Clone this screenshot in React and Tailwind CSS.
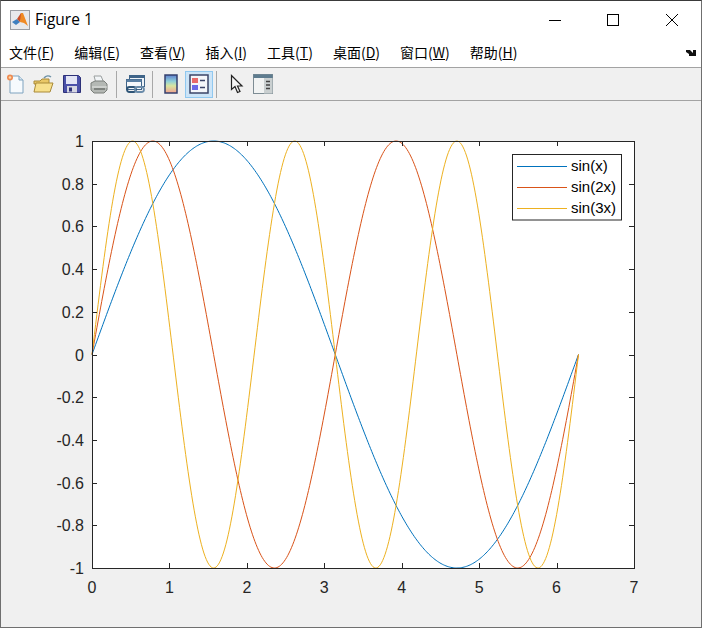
import { useMemo } from 'react';

const MENUS = [
  ['文件', 'F'],
  ['编辑', 'E'],
  ['查看', 'V'],
  ['插入', 'I'],
  ['工具', 'T'],
  ['桌面', 'D'],
  ['窗口', 'W'],
  ['帮助', 'H'],
];

// axes box, in page pixels
const LEFT = 92;
const RIGHT = 634;
const TOP = 141;
const BOTTOM = 568;

const X_TICKS = [0, 1, 2, 3, 4, 5, 6, 7];
const Y_TICKS = ['1', '0.8', '0.6', '0.4', '0.2', '0', '-0.2', '-0.4', '-0.6', '-0.8', '-1'];

const SERIES = [
  { label: 'sin(x)', k: 1, color: '#0072BD', y: 166 },
  { label: 'sin(2x)', k: 2, color: '#D95319', y: 187 },
  { label: 'sin(3x)', k: 3, color: '#EDB120', y: 208 },
];

const px = (x) => LEFT + (x / 7) * (RIGHT - LEFT);
const py = (y) => TOP + ((1 - y) / 2) * (BOTTOM - TOP);

function MatlabLogo() {
  return (
    <svg width="20" height="20" viewBox="0 0 20 20">
      <rect x="0.5" y="0.5" width="19" height="19" fill="#e8e9ec" stroke="#9a9da3" />
      <polygon points="2,12 7,9 10,12 6,15" fill="#3f7fbf" />
      <polygon points="7,9 11,3 13,3 10,12" fill="#c9502a" />
      <polygon points="11,3 13,3 18,16 14,13 10,12" fill="#f08a24" />
    </svg>
  );
}

function NewIcon() {
  return (
    <svg width="20" height="22" viewBox="0 0 20 22">
      <path d="M4 3h9l4 4v13H4z" fill="#f6fafd" stroke="#7fa3bf" />
      <path d="M13 3v4h4" fill="#d8e6f0" stroke="#7fa3bf" />
      <circle cx="4" cy="4.500" r="3" fill="#ef8a50" />
      <circle cx="4" cy="4.500" r="1.300" fill="#fbd7a8" />
    </svg>
  );
}

function OpenIcon() {
  return (
    <svg width="22" height="22" viewBox="0 0 22 22">
      <path d="M12 5c2-2.500 5-2.500 7-1" fill="none" stroke="#6f93a8" strokeWidth="1.500" />
      <path d="M2 8h6l2-2h7v5H2z" fill="#e9c766" stroke="#a98a38" />
      <path d="M2 19l2-9h17l-3 9z" fill="#f7e08c" stroke="#a98a38" />
    </svg>
  );
}

function SaveIcon() {
  return (
    <svg width="20" height="20" viewBox="0 0 20 20">
      <path d="M1.500 1.500h15l2 2v15h-17z" fill="#4a50a8" stroke="#2d3178" />
      <rect x="4" y="2" width="11" height="8" fill="#e3e5f5" />
      <rect x="5" y="12" width="10" height="6.500" fill="#d5d6e2" />
      <rect x="7" y="13.500" width="3" height="4" fill="#2d3178" />
    </svg>
  );
}

function PrintIcon() {
  return (
    <svg width="20" height="20" viewBox="0 0 20 20">
      <path d="M5 2h7l3 7H7z" fill="#f2f5f7" stroke="#9a9f9f" />
      <path d="M2 9l4-2h9l3 3v6l-3 3H5l-3-3z" fill="#b4b8b4" stroke="#7a7e7a" />
      <path d="M3 13h15" stroke="#e6e8e6" />
      <path d="M5 15h11" stroke="#6c706c" strokeWidth="1.500" />
    </svg>
  );
}

function LinkIcon() {
  return (
    <svg width="21" height="21" viewBox="0 0 21 21">
      <rect x="4.500" y="1.500" width="15" height="11" fill="#eef3f8" stroke="#3f6488" />
      <rect x="4.500" y="1.500" width="15" height="2.500" fill="#3f6488" />
      <rect x="1.500" y="5.500" width="15" height="10" fill="#f6f8fb" stroke="#3f6488" />
      <rect x="1.500" y="5.500" width="15" height="2.500" fill="#5a7fa3" />
      <rect x="2" y="13" width="9" height="5" rx="2.500" fill="none" stroke="#2f5577" strokeWidth="1.800" />
      <rect x="10" y="13" width="9" height="5" rx="2.500" fill="none" stroke="#6b8caa" strokeWidth="1.800" />
    </svg>
  );
}

function ColorbarIcon() {
  return (
    <svg width="14" height="20" viewBox="0 0 14 20">
      <defs>
        <linearGradient id="bar" x1="0" y1="0" x2="0" y2="1">
          <stop offset="0" stopColor="#5f7fd0" />
          <stop offset="0.35" stopColor="#8fd0d8" />
          <stop offset="0.6" stopColor="#d8e6a0" />
          <stop offset="1" stopColor="#f0a090" />
        </linearGradient>
      </defs>
      <rect x="1" y="1" width="12" height="18" fill="url(#bar)" stroke="#35406e" strokeWidth="1.500" />
    </svg>
  );
}

function LegendIcon() {
  return (
    <svg width="20" height="20" viewBox="0 0 20 20">
      <rect x="1" y="1" width="18" height="18" fill="#f4f6fa" stroke="#3b4468" strokeWidth="1.500" />
      <rect x="3" y="4" width="6" height="5" fill="#e86a6a" />
      <rect x="3" y="11" width="6" height="5" fill="#6a6ae8" />
      <path d="M11 6.500h5M11 13.500h5" stroke="#3b4468" strokeWidth="1.500" />
    </svg>
  );
}

function CursorIcon() {
  return (
    <svg width="14" height="20" viewBox="0 0 14 20">
      <path d="M1.500 1.500v14l3.500-3 2.500 6 2.500-1-2.500-5.500h4.500z" fill="#f5f5f5" stroke="#222" strokeWidth="1.200" />
    </svg>
  );
}

function PlotToolsIcon() {
  return (
    <svg width="20" height="20" viewBox="0 0 20 20">
      <rect x="0.500" y="0.500" width="19" height="19" fill="#f1f3f3" stroke="#7d8c94" />
      <rect x="0.500" y="0.500" width="19" height="3.500" fill="#5e7c8f" />
      <rect x="11" y="4" width="8.500" height="15.500" fill="#c9cfd0" />
      <path d="M13 7.500h4M13 11h4M13 14.500h4" stroke="#444" strokeWidth="1.500" />
    </svg>
  );
}

function Plot() {
  const lines = useMemo(
    () =>
      SERIES.map((s) => {
        const pts = [];
        for (let i = 0; i <= 400; i++) {
          const x = (i / 400) * 2 * Math.PI;
          pts.push(`${px(x).toFixed(2)},${py(Math.sin(s.k * x)).toFixed(2)}`);
        }
        return pts.join(' ');
      }),
    []
  );

  return (
    <svg className="block h-[526px] w-[700px]" viewBox="1 101 700 526" style={{ fontFamily: '"Liberation Sans", Arial, sans-serif' }}>
      <rect x={LEFT} y={TOP} width={RIGHT - LEFT} height={BOTTOM - TOP} fill="#fff" />

      {lines.map((pts, i) => (
        <polyline key={SERIES[i].label} points={pts} fill="none" stroke={SERIES[i].color} strokeWidth="1" />
      ))}

      {X_TICKS.map((t) => {
        const x = Math.round(px(t)) + 0.5;
        return (
          <g key={t}>
            <path d={`M${x} ${BOTTOM}v-5M${x} ${TOP}v5`} stroke="#262626" />
            <text x={px(t)} y={593} textAnchor="middle" fontSize="16" fill="#262626">{t}</text>
          </g>
        );
      })}
      {Y_TICKS.map((t, i) => {
        const y = Math.round(TOP + (i / 10) * (BOTTOM - TOP)) + 0.5;
        return (
          <g key={t}>
            <path d={`M${LEFT} ${y}h5M${RIGHT} ${y}h-5`} stroke="#262626" />
            <text x={84} y={y + 5.5} textAnchor="end" fontSize="16" fill="#262626">{t}</text>
          </g>
        );
      })}
      <rect x={LEFT + 0.5} y={TOP + 0.5} width={RIGHT - LEFT} height={BOTTOM - TOP} fill="none" stroke="#262626" />

      <rect x="512.500" y="154.500" width="109" height="65.500" fill="#fff" stroke="#262626" />
      {SERIES.map((s) => (
        <g key={s.label}>
          <path d={`M517 ${s.y + 0.5}H567`} stroke={s.color} />
          <text x="571" y={s.y + 5} fontSize="15" fill="#000">{s.label}</text>
        </g>
      ))}
    </svg>
  );
}

export default function App() {
  return (
    <div className="flex h-[628px] w-[702px] flex-col border border-[#6f6f6f] border-t-[#3a3a3a] bg-white font-['Liberation_Sans','Noto_Sans_CJK_SC',sans-serif]">
      {/* title bar */}
      <div className="flex h-[37px] items-center pl-[9px]">
        <MatlabLogo />
        <span className="ml-[5px] font-['Open_Sans',sans-serif] text-[15.5px] text-black">Figure 1</span>
        <div className="ml-auto flex items-center">
          <svg width="12" height="12" viewBox="0 0 12 12" className="mr-[46px]"><path d="M0 6.500h12" stroke="#000" /></svg>
          <svg width="12" height="12" viewBox="0 0 12 12" className="mr-[47px]"><rect x="0.500" y="0.500" width="11" height="11" fill="none" stroke="#000" /></svg>
          <svg width="12" height="12" viewBox="0 0 12 12" className="mr-[23px]"><path d="M0 0l12 12M12 0L0 12" stroke="#000" /></svg>
        </div>
      </div>

      {/* menu bar */}
      <div className="relative flex h-[29px] items-center gap-[20px] pl-[8px] text-[14px] text-black">
        {MENUS.map(([name, key]) => (
          <span key={key} className="font-['Noto_Sans_CJK_SC',sans-serif]">
            {name}(<span className="underline">{key}</span>)
          </span>
        ))}
        <svg width="10" height="8" viewBox="0 0 10 8" className="absolute right-[5px] top-[11px]">
          <path d="M0 1l4 0 3 3V1l3 0v6H3V5L0 3z" fill="#111" />
        </svg>
      </div>
      <div className="h-px bg-[#a3a3a3]" />

      {/* toolbar */}
      <div className="flex h-[32px] items-center bg-[#f0f0f0] pl-[4px]">
        <div className="flex w-[22px] justify-center"><NewIcon /></div>
        <div className="ml-[4px] flex w-[24px] justify-center"><OpenIcon /></div>
        <div className="ml-[6px] flex w-[22px] justify-center"><SaveIcon /></div>
        <div className="ml-[5px] flex w-[22px] justify-center"><PrintIcon /></div>
        <div className="ml-[6px] mr-[7px] h-[27px] w-px bg-[#a8a8a8]" />
        <div className="flex w-[22px] justify-center"><LinkIcon /></div>
        <div className="ml-[6px] mr-[7px] h-[27px] w-px bg-[#a8a8a8]" />
        <div className="flex w-[22px] justify-center"><ColorbarIcon /></div>
        <div className="ml-[3px] flex h-[27px] w-[28px] items-center justify-center border border-[#90c8f0] bg-[#cce4f7]"><LegendIcon /></div>
        <div className="ml-[3px] mr-[7px] h-[27px] w-px bg-[#a8a8a8]" />
        <div className="ml-[3px] flex w-[20px] justify-center"><CursorIcon /></div>
        <div className="ml-[6px] flex w-[20px] justify-center"><PlotToolsIcon /></div>
      </div>
      <div className="h-px bg-[#a3a3a3]" />

      {/* figure area */}
      <div className="flex-1 overflow-hidden bg-[#f0f0f0]">
        <Plot />
      </div>
    </div>
  );
}
